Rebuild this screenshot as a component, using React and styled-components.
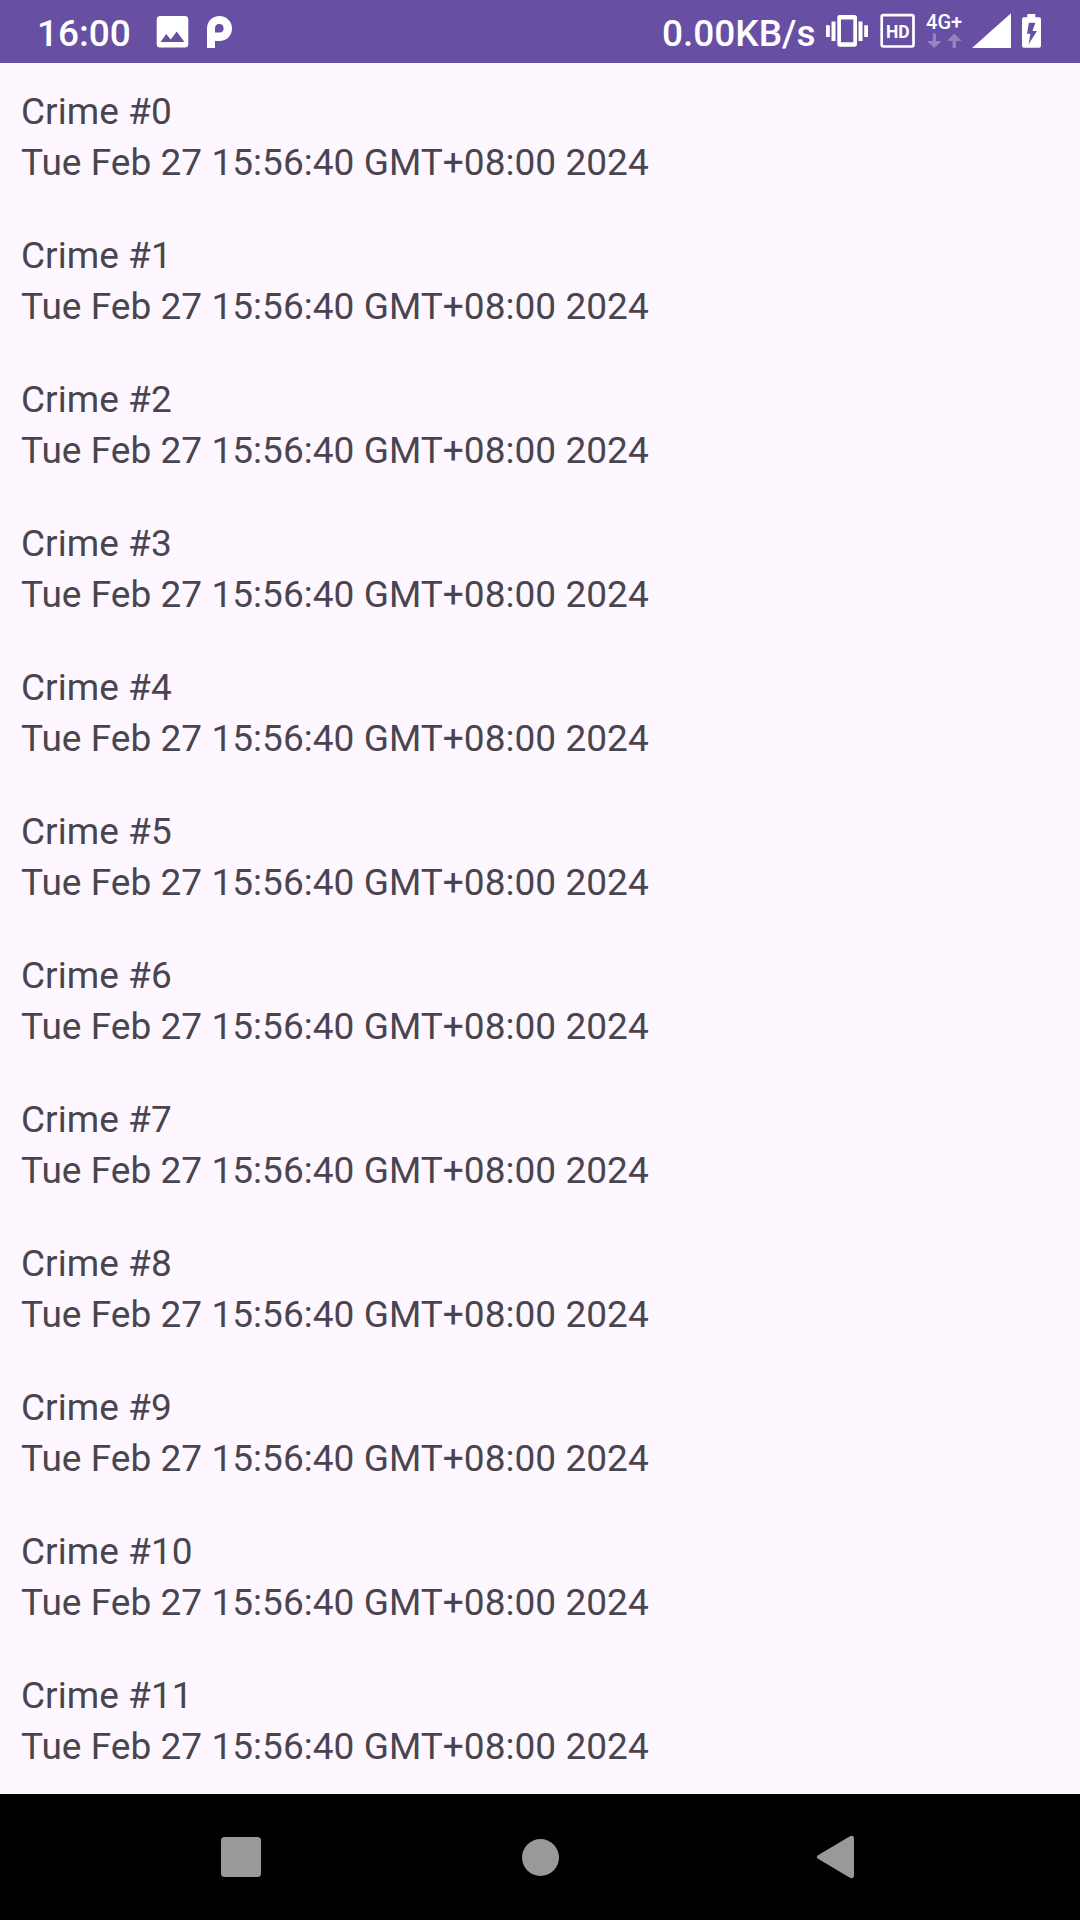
import React from "react";
import styled, { createGlobalStyle } from "styled-components";

const GlobalStyle = createGlobalStyle`
  body { margin: 0; background: #fef7ff; }
  * { box-sizing: border-box; }
`;

const Screen = styled.div`
  display: flex;
  flex-direction: column;
  width: 1080px;
  height: 1920px;
  overflow: hidden;
  background: #fef7ff;
  font-family: Roboto, "Liberation Sans", sans-serif;
`;

const StatusBar = styled.header`
  display: flex;
  justify-content: space-between;
  flex: none;
  height: 63px;
  padding: 0 39px 0 37px;
  background: #6750a4;
  color: #fff;
`;

const StatusGroup = styled.div`
  display: flex;
  align-items: flex-start;
`;

const StatusText = styled.span`
  width: ${(p) => p.$width}px;
  padding-top: 2px;
  font-size: 37px;
  font-weight: 500;
  line-height: 63px;
  white-space: nowrap;
`;

const StatusIcon = styled.svg`
  display: block;
  flex: none;
  height: 63px;
  margin-left: ${(p) => p.$gap || 0}px;
  fill: #fff;
  font-family: Roboto, sans-serif;
  font-weight: 500;
`;

const CrimeList = styled.ul`
  flex: 1;
  min-height: 0;
  margin: 0;
  padding: 0;
  list-style: none;
  overflow: hidden;
`;

const CrimeRow = styled.li`
  display: flex;
  flex-direction: column;
  height: 144px;
  padding: 23px 21px 19px;
  color: #49454f;
  font-size: 37px;
  line-height: 51px;
  letter-spacing: 0.04px;
  white-space: nowrap;
`;

const CrimeText = styled.span`
  display: block;
`;

const NavBar = styled.nav`
  display: flex;
  justify-content: center;
  flex: none;
  height: 126px;
  background: #000;
`;

const NavButton = styled.button`
  display: flex;
  align-items: center;
  justify-content: center;
  width: 299px;
  height: 126px;
  padding: 0;
  border: 0;
  background: transparent;
`;

const NavIcon = styled.svg`
  display: block;
  fill: #999;
`;

const crimes = Array.from({ length: 12 }, (_, i) => ({
  title: `Crime #${i}`,
  date: "Tue Feb 27 15:56:40 GMT+08:00 2024",
}));

const PhotoIcon = () => (
  <StatusIcon width="33" viewBox="156 0 33 63">
    <path
      fillRule="evenodd"
      d="M160.2 16h24.6a3.5 3.5 0 0 1 3.5 3.5v24.6a3.5 3.5 0 0 1-3.5 3.5h-24.6a3.5 3.5 0 0 1-3.5-3.5V19.500a3.500 3.500 0 0 1 3.500-3.500zM166.300 34.100L160.500 42h24l-7.800-10.500-6 7.900z"
    />
  </StatusIcon>
);

const ParkingIcon = () => (
  <StatusIcon width="26" $gap={17} viewBox="206 0 26 63">
    <path
      fillRule="evenodd"
      d="M207 48V28.500C207 21 212.500 16 219.500 16S232 21.500 232 28.500 226.500 41 219.500 41H215v7zM215 32.500h4.800a4.300 4.300 0 1 0-4.800-4.300z"
    />
  </StatusIcon>
);

const VibrateIcon = () => (
  <StatusIcon width="44" viewBox="825 0 44 63">
    <path
      fillRule="evenodd"
      d="M840 15h14.300a2.700 2.700 0 0 1 2.700 2.700v26.300a2.700 2.700 0 0 1-2.700 2.700H840a2.700 2.700 0 0 1-2.700-2.700V17.700a2.700 2.700 0 0 1 2.700-2.700zM841 19.500v22.700h12.300V19.500z"
    />
    <path d="M831.500 21.500h4V41h-4zM826 25.300h3.800v11.700H826zM858.500 21.500h4V41h-4zM864.200 25.300h3.800v11.700h-3.800z" />
  </StatusIcon>
);

const HdIcon = () => (
  <StatusIcon width="36" $gap={11} viewBox="880 0 36 63">
    <rect x="881.700" y="15.200" width="31.800" height="31.300" rx="1.700" fill="none" stroke="#fff" strokeWidth="2.700" />
    <text x="886" y="38" fontSize="18" fontWeight="700" textLength="23.700" lengthAdjust="spacingAndGlyphs">
      HD
    </text>
  </StatusIcon>
);

const NetworkIcon = () => (
  <StatusIcon width="38" $gap={9} viewBox="925 0 38 63">
    <text x="926" y="29" fontSize="20" textLength="36.200" lengthAdjust="spacingAndGlyphs">
      4G+
    </text>
    <path
      fillOpacity="0.300"
      d="M932.700 33.500h3.300v7.500h5.500L934.300 48l-7.200-7h5.600zM952.600 48v-7h-5.500l7.200-7.500 7.200 7.500h-5.600v7z"
    />
  </StatusIcon>
);

const SignalIcon = () => (
  <StatusIcon width="40" $gap={9} viewBox="972 0 40 63">
    <path d="M972 48L1011 13.300V48z" />
  </StatusIcon>
);

const BatteryIcon = () => (
  <StatusIcon width="20" $gap={9} viewBox="1021 0 20 63">
    <path
      fillRule="evenodd"
      d="M1027.300 14h8v3.300h3.700a2 2 0 0 1 2 2V45.700a2 2 0 0 1-2 2h-15a2 2 0 0 1-2-2V19.300a2 2 0 0 1 2-2h3.300zM1028.900 22.700l-1.900 11h3.400L1028.600 44.300l8.400-13.300h-4.500l2.900-8.300z"
    />
  </StatusIcon>
);

export default function App() {
  return (
    <Screen>
      <GlobalStyle />
      <StatusBar>
        <StatusGroup>
          <StatusText $width={119}>16:00</StatusText>
          <PhotoIcon />
          <ParkingIcon />
        </StatusGroup>
        <StatusGroup>
          <StatusText $width={163}>0.00KB/s</StatusText>
          <VibrateIcon />
          <HdIcon />
          <NetworkIcon />
          <SignalIcon />
          <BatteryIcon />
        </StatusGroup>
      </StatusBar>
      <CrimeList>
        {crimes.map((crime) => (
          <CrimeRow key={crime.title}>
            <CrimeText>{crime.title}</CrimeText>
            <CrimeText>{crime.date}</CrimeText>
          </CrimeRow>
        ))}
      </CrimeList>
      <NavBar>
        <NavButton aria-label="Recent apps">
          <NavIcon width="40" height="40" viewBox="0 0 40 40">
            <rect width="40" height="40" rx="3.500" />
          </NavIcon>
        </NavButton>
        <NavButton aria-label="Home">
          <NavIcon width="38" height="38" viewBox="0 0 38 38">
            <circle cx="19.500" cy="19.500" r="18.500" />
          </NavIcon>
        </NavButton>
        <NavButton aria-label="Back">
          <NavIcon width="46" height="44" viewBox="816 1835 46 44">
            <path d="M818 1855.200L849.500 1836.400Q854 1834.500 854 1839V1875Q854 1879.500 849.500 1877.600L818 1858.800Q815.500 1857 818 1855.200z" />
          </NavIcon>
        </NavButton>
      </NavBar>
    </Screen>
  );
}
